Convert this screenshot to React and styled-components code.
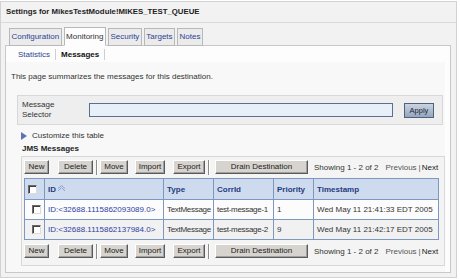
import React from 'react';
import styled, { createGlobalStyle } from 'styled-components';

const Global = createGlobalStyle`
  html, body {
    margin: 0;
    padding: 0;
    background: #ffffff;
  }
  body {
    font-family: "Liberation Sans", Arial, sans-serif;
    font-size: 8px;
    color: #333;
  }
`;

const tabs = ['Configuration', 'Monitoring', 'Security', 'Targets', 'Notes'];

const columns = [
  { key: 'check', label: '', width: 20 },
  { key: 'id', label: 'ID', width: 119, sort: true },
  { key: 'type', label: 'Type', width: 50 },
  { key: 'corr', label: 'CorrId', width: 60 },
  { key: 'prio', label: 'Priority', width: 40 },
  { key: 'time', label: 'Timestamp', width: 125 },
];

const messages = [
  {
    id: 'ID:<32688.1115862093089.0>',
    type: 'TextMessage',
    corr: 'test-message-1',
    prio: '1',
    time: 'Wed May 11 21:41:33 EDT 2005',
  },
  {
    id: 'ID:<32688.1115862137984.0>',
    type: 'TextMessage',
    corr: 'test-message-2',
    prio: '9',
    time: 'Wed May 11 21:42:17 EDT 2005',
  },
];

const SortIcon = () => (
  <svg width="9" height="7" viewBox="0 0 9 7">
    <path d="M1 6 L4.5 2.5 L8 6" fill="none" stroke="#8aa3d4" strokeWidth="1" />
    <path d="M1 3.5 L4.5 0.5 L8 3.5" fill="none" stroke="#8aa3d4" strokeWidth="1" />
  </svg>
);

const ToolbarRow = () => (
  <Toolbar>
    <Btn w={25}>New</Btn>
    <Btn w={35} ml={9}>Delete</Btn>
    <Sep ml={3} />
    <Btn w={28} ml={2}>Move</Btn>
    <Btn w={30} ml={7}>Import</Btn>
    <Btn w={32} ml={8}>Export</Btn>
    <Sep ml={3} />
    <Btn w={93} ml={5}>Drain Destination</Btn>
    <Paging>
      Showing 1 - 2 of 2
      <PageLink>Previous</PageLink>
      <PageBar>|</PageBar>
      <PageLink strong>Next</PageLink>
    </Paging>
  </Toolbar>
);

const App = () => (
  <>
    <Global />
    <Page>
      <TitleBar>Settings for MikesTestModule!MIKES_TEST_QUEUE</TitleBar>
      <Tabs>
        {tabs.map(t => (
          <Tab key={t} active={t === 'Monitoring'}>
            {t}
          </Tab>
        ))}
      </Tabs>
      <Panel>
        <SubTabs>
          <SubTab>Statistics</SubTab>
          <SubSep />
          <SubTab active>Messages</SubTab>
          <SubSep />
        </SubTabs>
        <Content>
          <Intro>This page summarizes the messages for this destination.</Intro>
          <SelectorBox>
            <SelectorLabel>
              Message
              <br />
              Selector
            </SelectorLabel>
            <SelectorInput />
            <ApplyButton>Apply</ApplyButton>
          </SelectorBox>
          <Customize>
            <svg width="6" height="8" viewBox="0 0 6 8">
              <path d="M0 0 L6 4 L0 8 Z" fill="#5f74b8" />
            </svg>
            Customize this table
          </Customize>
          <SectionTitle>JMS Messages</SectionTitle>
          <TableFrame>
            <ToolbarRow />
            <Grid>
              <colgroup>
                {columns.map(c => (
                  <Col key={c.key} w={c.width} />
                ))}
              </colgroup>
              <thead>
                <tr>
                  {columns.map(c => (
                    <HeadCell key={c.key}>
                      {c.key === 'check' ? <Check /> : c.label}
                      {c.sort && <SortIcon />}
                    </HeadCell>
                  ))}
                </tr>
              </thead>
              <tbody>
                {messages.map((m, i) => (
                  <Row key={m.id} alt={i % 2 === 1}>
                    <Cell center>
                      <Check />
                    </Cell>
                    <Cell>
                      <IdLink>{m.id}</IdLink>
                    </Cell>
                    <Cell tight>{m.type}</Cell>
                    <Cell tight>{m.corr}</Cell>
                    <Cell>{m.prio}</Cell>
                    <Cell>{m.time}</Cell>
                  </Row>
                ))}
              </tbody>
            </Grid>
            <ToolbarRow />
          </TableFrame>
        </Content>
      </Panel>
    </Page>
  </>
);

export default App;

const Page = styled.div`
  width: 455px;
  height: 275px;
  margin-top: 1px;
  border: 1px solid #d2d2d2;
  background: #f2f2f2;
  display: flex;
  flex-direction: column;
`;

const TitleBar = styled.div`
  height: 20px;
  line-height: 20px;
  padding-left: 5px;
  font-weight: bold;
  font-size: 7.8px;
  color: #222;
  border-bottom: 1px solid #d9d9d9;
`;

const Tabs = styled.div`
  display: flex;
  align-items: flex-end;
  gap: 2px;
  margin-top: 5px;
  padding-left: 8px;
  height: 17px;
  position: relative;
  z-index: 1;
`;

const Tab = styled.div`
  height: ${p => (p.active ? 17 : 16)}px;
  line-height: ${p => (p.active ? 17 : 16)}px;
  padding: 0 1.5px;
  border: 1px solid #b8b8b8;
  border-bottom: ${p => (p.active ? '1px solid #fdfdfd' : '1px solid #b8b8b8')};
  background: ${p => (p.active ? '#fdfdfd' : '#ebebeb')};
  color: ${p => (p.active ? '#333' : '#2e3f94')};
  margin-bottom: -1px;
`;

const Panel = styled.div`
  margin: 0 5px 0 4px;
  height: 226px;
  border: 1px solid #c8c8c8;
  background: #fdfdfd;
  display: flex;
  flex-direction: column;
`;

const SubTabs = styled.div`
  display: flex;
  align-items: center;
  height: 16px;
  padding-left: 12px;
  gap: 5px;
`;

const SubTab = styled.span`
  color: ${p => (p.active ? '#111' : '#2e3f94')};
  font-weight: ${p => (p.active ? 'bold' : 'normal')};
  font-size: 8px;
`;

const SubSep = styled.span`
  width: 1px;
  height: 11px;
  background: #cfcfcf;
`;

const Content = styled.div`
  flex: 1;
  margin: 0 5px 0 0;
  padding: 9px 0 0 5px;
  background: #f8f8f8;
  display: flex;
  flex-direction: column;
  align-items: flex-start;
`;

const Intro = styled.div`
  line-height: 12px;
`;

const SelectorBox = styled.div`
  margin: 12px 0 0 6px;
  width: 424px;
  height: 28px;
  border: 1px solid #d8d8d8;
  background: #eeeeee;
  display: flex;
  align-items: center;
`;

const SelectorLabel = styled.div`
  width: 67px;
  padding-left: 4px;
  line-height: 10px;
  color: #333;
`;

const SelectorInput = styled.div`
  width: 302px;
  height: 12px;
  border: 1px solid #5b6f8e;
  background: #e7eff9;
`;

const ApplyButton = styled.div`
  margin-left: 11px;
  width: 28px;
  height: 13px;
  line-height: 13px;
  text-align: center;
  border: 1px solid #4f617d;
  background: linear-gradient(#c9d4e2, #94a6be);
  color: #1c2433;
  font-size: 7.5px;
`;

const Customize = styled.div`
  margin: 5px 0 0 10px;
  display: flex;
  align-items: center;
  gap: 5px;
  line-height: 12px;
`;

const SectionTitle = styled.div`
  margin: 1px 0 0 11px;
  line-height: 12px;
  font-weight: bold;
  color: #222;
`;

const TableFrame = styled.div`
  margin: 1px 0 0 10px;
  width: 420px;
  padding: 3px 0 7px 2px;
  border: 1px solid #d8d8d8;
  background: #f4f4f4;
  display: flex;
  flex-direction: column;
  gap: 4px;
`;

const Toolbar = styled.div`
  display: flex;
  align-items: center;
  height: 14px;
`;

const Btn = styled.div`
  box-sizing: border-box;
  width: ${p => p.w}px;
  margin-left: ${p => p.ml || 0}px;
  height: 14px;
  line-height: 12px;
  text-align: center;
  background: #d7d4cf;
  border: 1px solid;
  border-color: #ffffff #5a5a5a #5a5a5a #ffffff;
  box-shadow: inset -1px -1px 0 #a0a0a0;
  color: #222;
`;

const Sep = styled.div`
  width: 0;
  height: 15px;
  margin-left: ${p => p.ml || 0}px;
  border-left: 1px solid #8c8c8c;
  border-right: 1px solid #ffffff;
`;

const Paging = styled.div`
  margin-left: 6px;
  color: #333;
  display: flex;
  white-space: nowrap;
`;

const PageLink = styled.span`
  margin-left: ${p => (p.strong ? 0 : 7)}px;
  color: ${p => (p.strong ? '#222' : '#555')};
`;

const PageBar = styled.span`
  margin: 0 1px 0 2px;
  color: #555;
`;

const Grid = styled.table`
  border-collapse: collapse;
  table-layout: fixed;
  width: 414px;
  border: 1px solid #7d97bf;
`;

const Col = styled.col`
  width: ${p => p.w}px;
`;

const HeadCell = styled.th`
  height: 20px;
  padding: 0 3px;
  text-align: left;
  font-weight: bold;
  color: #1f3b7f;
  background: #cedbee;
  border: 1px solid #7d97bf;
  white-space: nowrap;
  overflow: hidden;
  svg {
    margin-left: 1px;
  }
`;

const Row = styled.tr`
  background: ${p => (p.alt ? '#f1f1f1' : '#fcfcfc')};
`;

const Cell = styled.td`
  height: 19px;
  padding: 0 0 0 3px;
  text-align: ${p => (p.center ? 'center' : 'left')};
  border: 1px solid #7d97bf;
  white-space: nowrap;
  overflow: hidden;
  color: #333;
  letter-spacing: ${p => (p.tight ? '-0.3px' : '0')};
`;

const IdLink = styled.span`
  color: #2e3fa3;
`;

const Check = styled.span`
  display: inline-block;
  vertical-align: middle;
  width: 7px;
  height: 7px;
  background: #fff;
  border: 1px solid;
  border-color: #6a6a6a #dcdcdc #dcdcdc #6a6a6a;
  box-shadow: inset 1px 1px 0 #404040;
`;
